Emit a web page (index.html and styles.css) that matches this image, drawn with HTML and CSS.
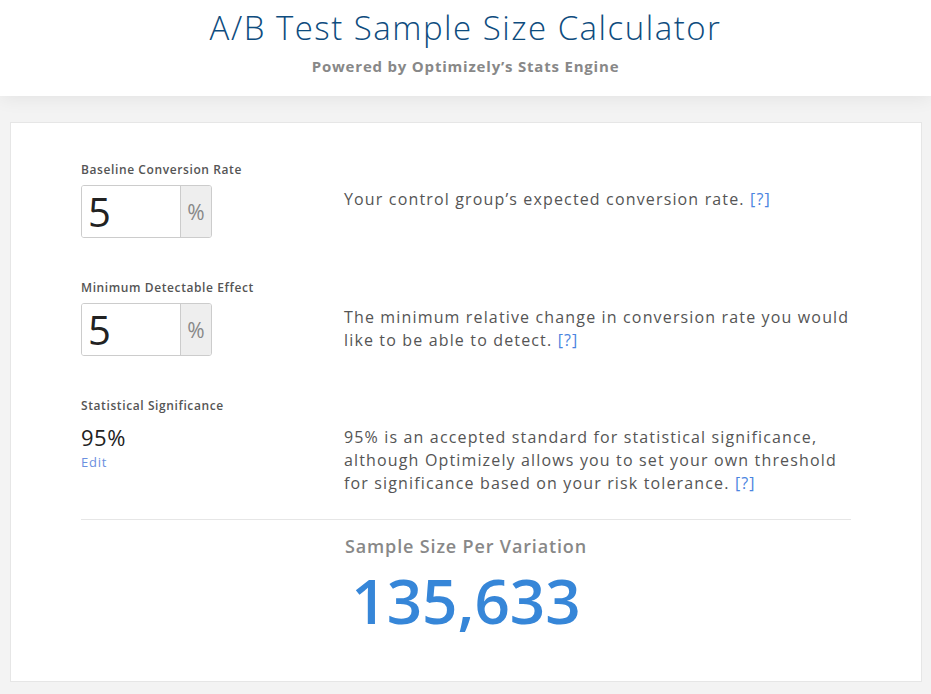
FILE: index.html
```html
<!DOCTYPE html>
<html lang="en">
<head>
    <meta charset="UTF-8">
    <meta name="viewport" content="width=device-width, initial-scale=1.0">
    <title>A/B Test Sample Size Calculator</title>
    <link rel="stylesheet" href="styles.css">
</head>
<body>
    <header class="header">
        <h1>A/B Test Sample Size Calculator</h1>
        <p class="subtitle">Powered by Optimizely’s Stats Engine</p>
    </header>

    <div class="card">
        <div class="field">
            <div class="field-input">
                <label>Baseline Conversion Rate</label>
                <div class="input-addon">
                    <input type="text" value="5">
                    <span class="addon">%</span>
                </div>
            </div>
            <p class="field-desc">Your control group’s expected conversion rate. <a href="#">[?]</a></p>
        </div>

        <div class="field">
            <div class="field-input">
                <label>Minimum Detectable Effect</label>
                <div class="input-addon">
                    <input type="text" value="5">
                    <span class="addon">%</span>
                </div>
            </div>
            <p class="field-desc">The minimum relative change in conversion rate you would like to be able to detect. <a href="#">[?]</a></p>
        </div>

        <div class="field field-last">
            <div class="field-input">
                <label>Statistical Significance</label>
                <div class="sig-value">95%</div>
                <a href="#" class="edit">Edit</a>
            </div>
            <p class="field-desc field-desc-tight">95% is an accepted standard for statistical significance, although Optimizely allows you to set your own threshold for significance based on your risk tolerance. <a href="#">[?]</a></p>
        </div>

        <div class="result">
            <h2>Sample Size Per Variation</h2>
            <div class="result-number">135,633</div>
        </div>
    </div>
</body>
</html>
```

FILE: styles.css
```css
body {
    font-family: 'Open Sans', 'Lato', sans-serif;
    margin: 0;
    background: #f3f3f3;
    color: #555;
}
.header {
    background: white;
    height: 96px;
    text-align: center;
    box-shadow: 0 2px 18px rgba(0,0,0,0.07);
    padding-top: 8px;
    box-sizing: border-box;
}
.header h1 {
    margin: 0;
    font-size: 33px;
    font-weight: 300;
    line-height: 40px;
    letter-spacing: 1.5px;
    color: #0e4c7e;
}
.subtitle {
    margin: 8px 0 0;
    font-size: 15px;
    font-weight: 700;
    color: #888;
    line-height: 20px;
    letter-spacing: 0.8px;
}
.card {
    margin: 26px 9px 12px 10px;
    background: white;
    border: 1px solid #e6e6e6;
    padding: 39px 70px 41px;
}
.field {
    display: flex;
    margin-bottom: 42px;
}
.field-last {
    margin-bottom: 0;
}
.field-input {
    width: 263px;
    flex-shrink: 0;
}
label {
    display: block;
    font-size: 12px;
    font-weight: 600;
    line-height: 16px;
    letter-spacing: 0.6px;
    color: #555;
    margin-bottom: 7px;
}
.input-addon {
    display: flex;
    width: 131px;
    height: 53px;
    border: 1px solid #ccc;
    border-radius: 3px;
    box-sizing: border-box;
    overflow: hidden;
}
.input-addon input {
    width: 98px;
    box-sizing: border-box;
    border: none;
    padding: 0 6px;
    font-family: inherit;
    font-size: 40px;
    color: #222;
    outline: none;
}
.addon {
    flex: 1;
    background: #eee;
    border-left: 1px solid #ccc;
    color: #888;
    font-size: 21px;
    display: flex;
    align-items: center;
    justify-content: center;
}
.field-desc {
    margin: 0;
    padding-top: 26px;
    font-size: 16px;
    line-height: 23px;
    letter-spacing: 1.15px;
    color: #555;
    max-width: 510px;
}
.field-desc-tight {
    padding-top: 28px;
}
.field-desc a, .edit {
    color: #4b84e0;
    text-decoration: none;
}
.sig-value {
    margin-top: 9px;
    font-size: 22px;
    line-height: 28px;
    letter-spacing: 0.5px;
    color: #222;
}
.edit {
    display: block;
    margin-top: 2px;
    font-size: 13px;
    line-height: 18px;
    letter-spacing: 0.8px;
    color: #6b8fe0;
}
.result {
    border-top: 1px solid #e6e6e6;
    margin-top: 24px;
    text-align: center;
}
.result h2 {
    margin: 14px 0 0;
    font-size: 18px;
    font-weight: 600;
    color: #888;
    line-height: 24px;
    letter-spacing: 0.85px;
}
.result-number {
    font-size: 62px;
    font-weight: 600;
    color: #3686d8;
    line-height: 80px;
    margin-top: 2px;
}
```
